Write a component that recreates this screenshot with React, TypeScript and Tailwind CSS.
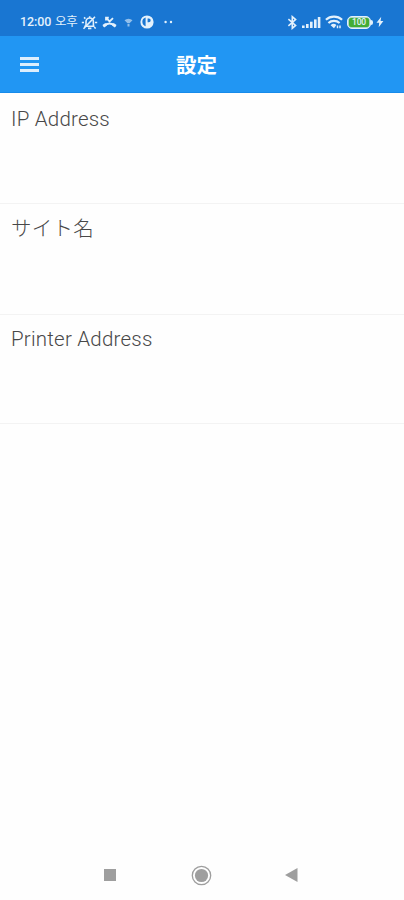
import React from "react";

const fields = [
  { label: "IP Address", className: "h-[111px] pt-[13.5px]" },
  { label: "サイト名", className: "h-[111px] pt-[13px]" },
  { label: "Printer Address", className: "h-[109px] pt-3" },
];

const StatusBar = () => {
  return (
    <div className="flex h-9 items-center bg-[#1976d2] pt-2 pl-5 text-[#e3f1fc]">
      <span className="w-[35px] whitespace-nowrap text-[12.5px] leading-4 font-medium tracking-[-0.1px]">12:00</span>
      <span className="w-[26px] whitespace-nowrap text-[12.5px] leading-4 tracking-[-0.2px]">오후</span>
      {/* muted bell */}
      <svg width="17" height="17" viewBox="0 0 17 17" fill="none" stroke="currentColor" strokeWidth="1.6">
        <path d="M3.3 12.3h10.2M5 12V7.7a3.7 3.7 0 0 1 7.4 0V12M7 14.4h3.4M8.7 4V2.2" />
        <path d="M2.5 14.7 14 2.7" strokeWidth="1.6" />
        <path d="M.8 8.5H3M14 8.5h2.2M3 3.4l1.4 1.2M13.2 13.2l1.5 1.3" />
      </svg>
      {/* missed call */}
      <svg className="ml-1" width="15" height="14" viewBox="0 0 15 14" fill="none" stroke="currentColor">
        <path d="M4 5.4V2.6h2.8M4.2 2.8l3.4 3.6L11 3.1" strokeWidth="1.8" />
        <path d="M1.5 11.4C5 7.6 10 7.6 13.5 11.4" strokeWidth="2" />
        <path d="m1.3 11.3 2.9-2M13.7 11.3l-2.9-2" strokeWidth="3" />
      </svg>
      <svg className="ml-1.5 opacity-60" width="11" height="12" viewBox="0 0 11 12" fill="currentColor">
        <path d="M1.5 4.2a6 6 0 0 1 8 0L6.5 7.2h-2ZM4.5 8h2v2.5h-2Z" />
      </svg>
      <svg className="ml-[6px]" width="14" height="14" viewBox="0 0 14 14" fill="none">
        <circle cx="7" cy="7" r="6.6" fill="currentColor" />
        <path d="M5.6 2.4v8.8A4.6 4.6 0 0 1 5.6 2.4ZM7.6 3.4h1.2a1.9 1.9 0 0 1 0 3.8H7.6Z" fill="#1976d2" />
      </svg>
      <svg className="ml-[10px]" width="10" height="4" viewBox="0 0 10 4" fill="currentColor">
        <circle cx="1.6" cy="2" r="1.2" />
        <circle cx="7" cy="2" r="1.2" />
      </svg>

      <div className="ml-auto flex items-center pr-5">
        <svg width="11" height="15" viewBox="0 0 11 15" fill="none" stroke="currentColor" strokeWidth="1.6">
          <path d="m1.4 4.2 7.2 6.2-3.3 2.9V1.7l3.3 2.9-7.2 6.2" />
        </svg>
        <svg className="ml-1" width="19" height="13" viewBox="0 0 19 13" fill="currentColor">
          <rect x="0" y="9.5" width="2.6" height="2.5" />
          <rect x="4" y="8" width="2.6" height="4" />
          <rect x="8" y="5.7" width="2.6" height="6.3" />
          <rect x="12" y="3.4" width="2.6" height="8.6" />
          <rect x="15.8" y="1" width="2.6" height="11" />
        </svg>
        <svg className="ml-1" width="18" height="14" viewBox="0 0 18 14" fill="none" stroke="currentColor">
          <path d="M.9 4.8c4.5-4.2 11.7-4.2 16.2 0" strokeWidth="2.1" />
          <path d="M3.4 8c3.1-2.9 8.1-2.9 11.2 0" strokeWidth="2.1" />
          <path d="M5.6 10.2a4.3 4.3 0 0 1 5.8-.2L9 13.2Z" fill="currentColor" stroke="none" />
          <path d="M12.5 10.5v2.7M15 13.2v-2.7" strokeWidth="1.5" />
        </svg>
        <div className="ml-1 flex items-center">
          <div className="h-[13px] w-6 rounded-[5px] border-[1.5px] border-current bg-[#a9d5c8] p-px">
            <div className="flex h-full items-center justify-center rounded-[2px] bg-[#43ad35] text-[8.5px] leading-none font-medium tracking-[-0.2px]">
              100
            </div>
          </div>
          <span className="h-[5px] w-[2px] rounded-r-sm bg-current" />
        </div>
        <svg className="ml-[3px]" width="8" height="12" viewBox="0 0 8 12" fill="currentColor">
          <path d="M5.2.8.5 6.7h2.7L2.7 11.2 7.4 5.1H4.6Z" />
        </svg>
      </div>
    </div>
  );
};

const AppBar = () => {
  return (
    <header className="grid h-[57px] grid-cols-[1fr_auto_1fr] items-center border-b border-[#178bea] bg-[#2196f3] pr-[31px] pl-5 text-white">
      <button type="button" aria-label="Menu" className="flex w-[19px] flex-col gap-[3px]">
        <span className="h-[3px] bg-[#dceefd]" />
        <span className="h-[3px] bg-[#dceefd]" />
        <span className="h-[3px] bg-[#dceefd]" />
      </button>
      <h1 className="pt-[3px] text-[20.5px] leading-6 font-bold">設定</h1>
    </header>
  );
};

const NavigationBar = () => {
  return (
    <nav className="mt-auto flex h-[50px] items-center pl-[104px] text-[#9e9e9e]">
      <span className="h-3 w-3 bg-current" />
      <svg className="ml-[75px]" width="21" height="21" viewBox="0 0 21 21" fill="none">
        <circle cx="10.5" cy="10.5" r="9.2" stroke="currentColor" strokeWidth="1.3" />
        <circle cx="10.5" cy="10.5" r="6.6" fill="currentColor" />
      </svg>
      <svg className="ml-[73px]" width="13" height="14" viewBox="0 0 13 14" fill="currentColor">
        <path d="M12.5 0v14L0 7Z" />
      </svg>
    </nav>
  );
};

const App = () => {
  return (
    <div className="flex h-[900px] w-full flex-col bg-[#fefefe] font-['Roboto','Noto_Sans_CJK_JP','Noto_Sans_CJK_KR',sans-serif]">
      <StatusBar />
      <AppBar />
      <main>
        {fields.map((field) => (
          <section key={field.label} className={`${field.className} border-b border-[#f3f3f3] px-[11px]`}>
            <h2 className="text-[20.5px] leading-6 font-light tracking-[0.22px] text-[#484848]">{field.label}</h2>
          </section>
        ))}
      </main>
      <NavigationBar />
    </div>
  );
};

export default App;
